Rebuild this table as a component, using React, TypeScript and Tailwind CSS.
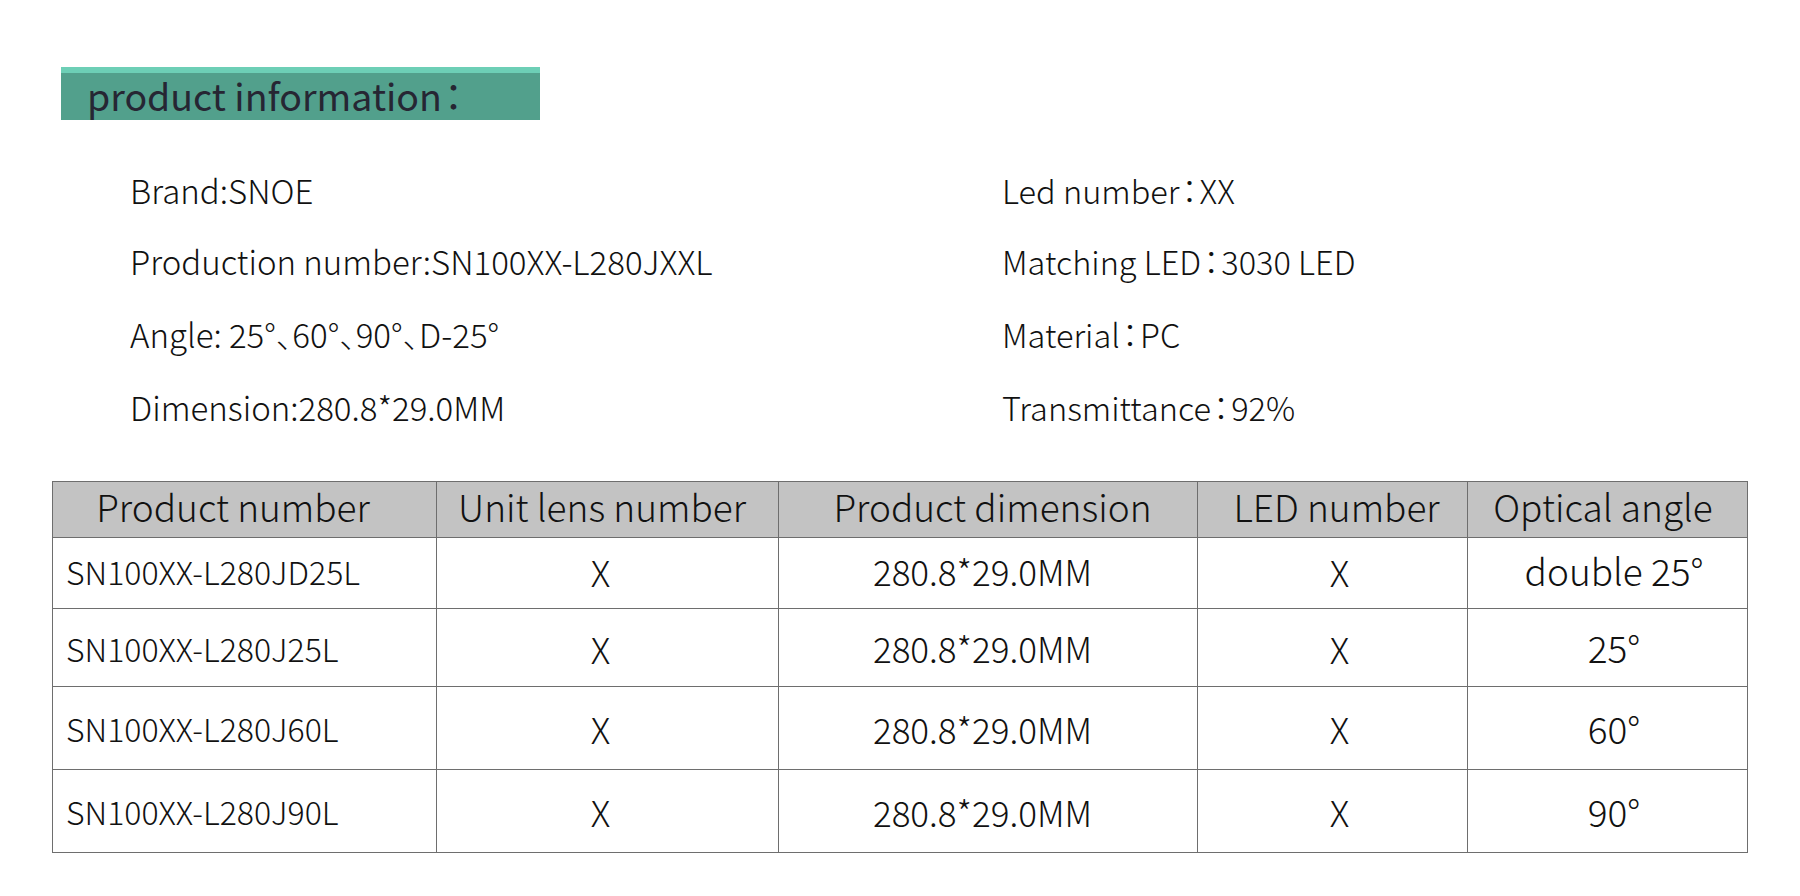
import React from "react";

const font = "font-['Noto_Sans_CJK_SC','Noto_Sans',sans-serif]";

function Colon() {
  return (
    <span className="font-['Noto_Sans_CJK_JP','Noto_Sans_CJK_SC',sans-serif] [font-feature-settings:'halt'] mx-[0.06em]">
      ：
    </span>
  );
}

function Comma() {
  return (
    <span className="font-['Noto_Sans_CJK_JP','Noto_Sans_CJK_SC',sans-serif] [font-feature-settings:'halt']">
      、
    </span>
  );
}

const leftInfo = [
  { a: <>Brand:SNOE</>, k: "b", h: "h-[72px]" },
  { a: <>Production number:SN100XX-L280JXXL</>, k: "p", h: "h-[71px]" },
  {
    a: (
      <>
        Angle: 25°<Comma />60°<Comma />90°<Comma />D-25°
      </>
    ),
    k: "a",
    h: "h-[74px]",
  },
  { a: <>Dimension:280.8*29.0MM</>, k: "d", h: "h-[72px]" },
];
const rightInfo = [
  { a: "Led number", b: "XX", h: "h-[72px]" },
  { a: "Matching LED", b: "3030 LED", h: "h-[71px]" },
  { a: "Material", b: "PC", h: "h-[74px]" },
  { a: "Transmittance", b: "92%", h: "h-[72px]" },
];

const headers = [
  { t: "Product number", c: "w-[384px] pr-[23px]" },
  { t: "Unit lens number", c: "w-[342px] pr-[11px]" },
  { t: "Product dimension", c: "w-[419px] pl-[9px]" },
  { t: "LED number", c: "w-[270px] pl-[8px]" },
  { t: "Optical angle", c: "w-[280px] pr-[9px]" },
];

const cellCls = [
  "text-left pl-[13px] text-[32px]",
  "text-center pr-[14px] text-[36px]",
  "text-center pr-[11px] text-[35px]",
  "text-center pl-[14px] text-[36px]",
  "text-center pl-[13px] text-[37px]",
];

const rows = [
  { h: "h-[71px]", p: "pb-[5px]", cells: ["SN100XX-L280JD25L", "X", "280.8*29.0MM", "X", "double 25°"] },
  { h: "h-[78px]", p: "pb-0", cells: ["SN100XX-L280J25L", "X", "280.8*29.0MM", "X", "25°"] },
  { h: "h-[83px]", p: "pb-0", cells: ["SN100XX-L280J60L", "X", "280.8*29.0MM", "X", "60°"] },
  { h: "h-[83px]", p: "pb-0", cells: ["SN100XX-L280J90L", "X", "280.8*29.0MM", "X", "90°"] },
];

export default function App() {
  return (
    <div className={`w-[1800px] h-[896px] bg-white text-[#111111] ${font} font-light overflow-hidden`}>
      <div className="pt-[67px] pl-[61px]">
        <div className="w-[479px] h-[53px] bg-[#52a08c] border-t-[6px] border-[#6dcfb6] pl-[26px] text-[37.5px] leading-[44px] text-[#262633] font-normal">
          product information<Colon />
        </div>
      </div>

      <div className="mt-[34px] flex pl-[130px]">
        <div className="w-[872px] flex flex-col">
          {leftInfo.map((r) => (
            <div key={r.k} className={`${r.h} flex items-center text-[33px] leading-none whitespace-pre`}>
              <span>{r.a}</span>
            </div>
          ))}
        </div>
        <div className="flex flex-col">
          {rightInfo.map((r) => (
            <div key={r.a} className={`${r.h} flex items-center text-[32.5px] leading-none whitespace-pre`}>
              <span>
                {r.a}
                <Colon />
                {r.b}
              </span>
            </div>
          ))}
        </div>
      </div>

      <div className="mt-[38px] pl-[52px]">
        <table className="border-collapse table-fixed w-[1695px]">
          <thead>
            <tr className="h-[56px] bg-[#c3c3c3]">
              {headers.map((h) => (
                <th
                  key={h.t}
                  className={`${h.c} border border-[#6e6e6e] text-[37px] font-light text-center pt-0 pb-[6px] leading-none`}
                >
                  {h.t}
                </th>
              ))}
            </tr>
          </thead>
          <tbody>
            {rows.map((r, ri) => (
              <tr key={ri} className={r.h}>
                {r.cells.map((c, i) => (
                  <td key={i} className={`border border-[#6e6e6e] leading-none pt-0 ${r.p} ${cellCls[i]}`}>
                    {c}
                  </td>
                ))}
              </tr>
            ))}
          </tbody>
        </table>
      </div>
    </div>
  );
}
